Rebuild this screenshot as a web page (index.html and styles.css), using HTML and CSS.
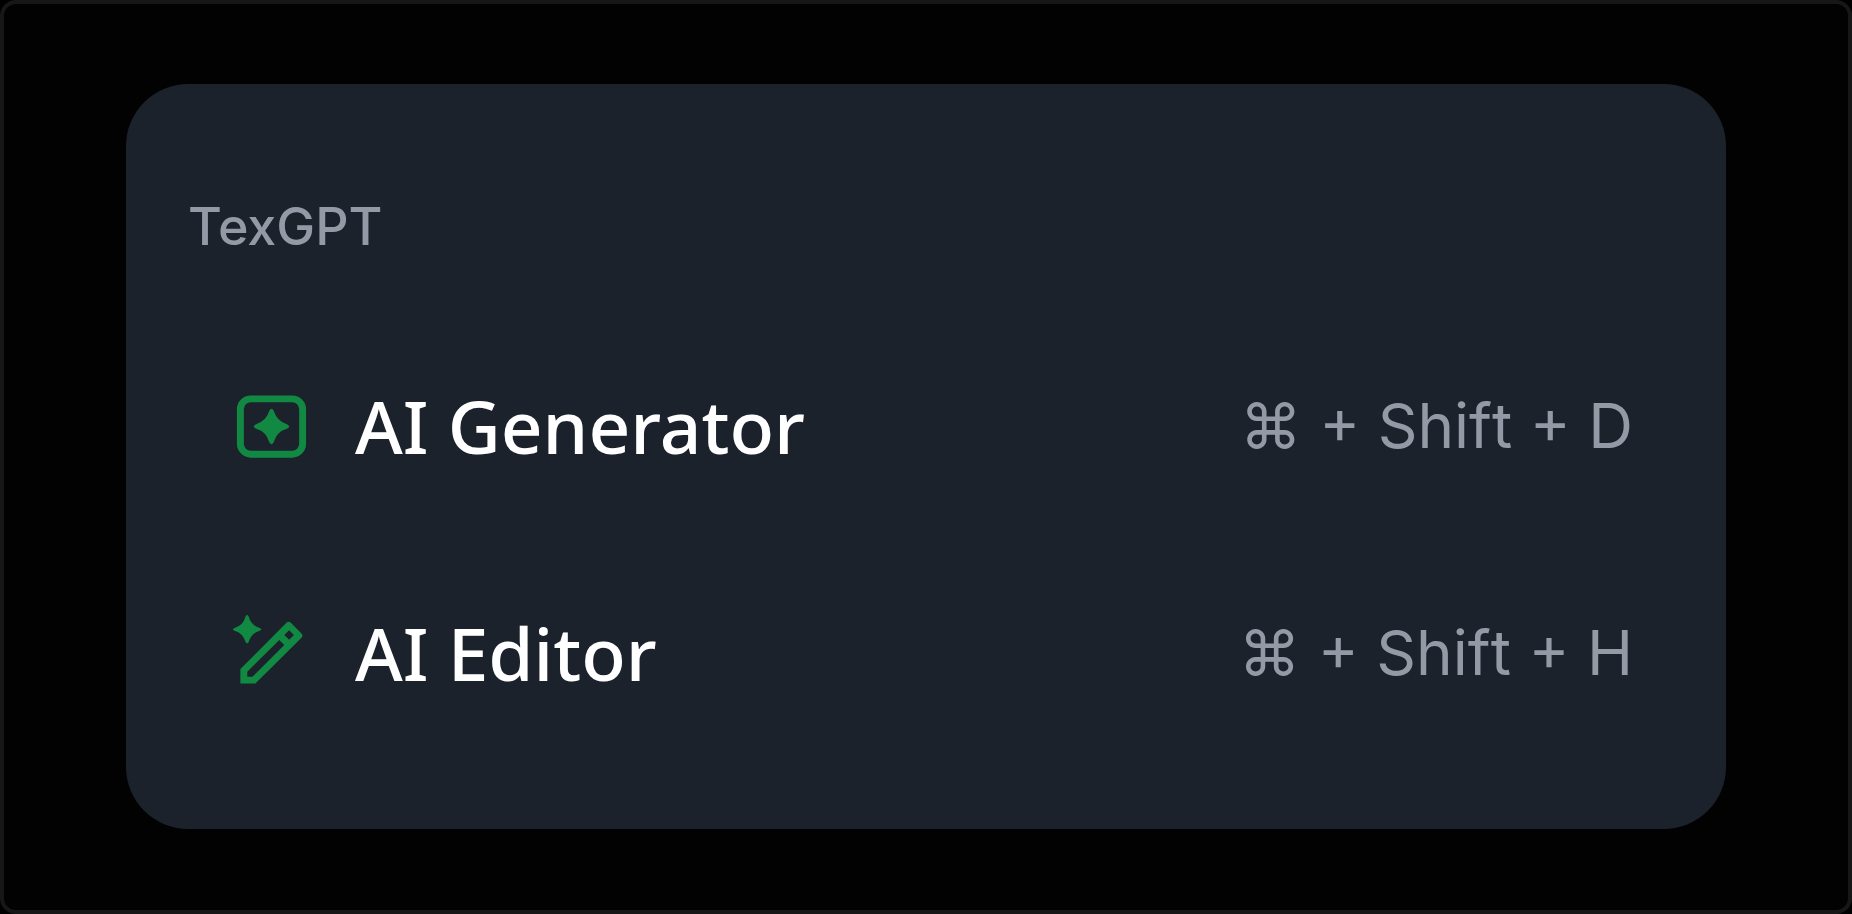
FILE: index.html
```html
<!DOCTYPE html>
<html lang="en">
<head>
<meta charset="utf-8">
<title>TexGPT</title>
<link rel="stylesheet" href="styles.css">
</head>
<body>
<main class="frame">
  <section class="menu" aria-labelledby="menu-title">
    <h1 class="menu-title" id="menu-title">TexGPT</h1>
    <button class="menu-item" type="button">
      <svg class="icon" viewBox="0 0 24 24" aria-hidden="true">
        <rect x="3" y="4" width="18" height="16" rx="3" fill="none" stroke="currentColor" stroke-width="2"/>
        <path fill="currentColor" d="M11.4 7.4Q12 6.4 12.6 7.4Q13.5 10.5 16.6 11.4Q17.6 12 16.6 12.6Q13.5 13.5 12.6 16.6Q12 17.6 11.4 16.6Q10.5 13.5 7.4 12.6Q6.4 12 7.4 11.4Q10.5 10.5 11.4 7.4Z"/>
      </svg>
      <span class="label">AI Generator</span>
      <kbd class="shortcut">⌘ + Shift + D</kbd>
    </button>
    <button class="menu-item" type="button">
      <svg class="icon" viewBox="0 0 24 24" aria-hidden="true">
        <path fill="currentColor" d="M4.5 1.3Q4.95 .5 5.4 1.3Q6.1 3.9 8.6 4.6Q9.5 5 8.6 5.4Q6.1 6.1 5.4 8.7Q4.95 9.5 4.5 8.7Q3.8 6.1 1.3 5.4Q.4 5 1.3 4.6Q3.8 3.9 4.5 1.3Z"/>
        <path fill="currentColor" fill-rule="evenodd" d="M3 20.7V16.5L16.25 3.2Q16.95 2.5 17.65 3.2L20.6 6.15Q21.3 6.85 20.6 7.55L7.35 20.7ZM5 17.25V18.75H6.5L15.7 9.55L14.25 8.1ZM17.1 5.25L15.7 6.65L17.1 8.05L18.5 6.65Z"/>
      </svg>
      <span class="label">AI Editor</span>
      <kbd class="shortcut">⌘ + Shift + H</kbd>
    </button>
  </section>
</main>
</body>
</html>
```
FILE: styles.css
```css
* {
  box-sizing: border-box;
}

body {
  margin: 0;
  background: #000;
}

.frame {
  min-height: 100vh;
  padding: 80px 122px;
  border: 4px solid #171717;
  border-radius: 16px;
  background: #020202;
}

.menu {
  display: flex;
  flex-direction: column;
  padding: 62px;
  border-radius: 62px;
  background: #1b222b;
}

.menu-title {
  margin: 0;
  padding: 49px 0 54px;
  color: #9499a6;
  font: 500 52px/64px Inter, sans-serif;
}

.menu-item {
  display: flex;
  align-items: flex-start;
  gap: 42px;
  padding: 72px 31px 72px 42px;
  border: 0;
  background: none;
  color: #fff;
  text-align: left;
  cursor: pointer;
}

.icon {
  flex: none;
  width: 83px;
  height: 83px;
  color: #128943;
}

.label {
  flex: 1;
  font: 500 73px/81px "Noto Sans", sans-serif;
}

.shortcut {
  color: #9499a6;
  font: 400 62px/81px Inter, sans-serif;
  font-kerning: none;
  white-space: nowrap;
}
```
